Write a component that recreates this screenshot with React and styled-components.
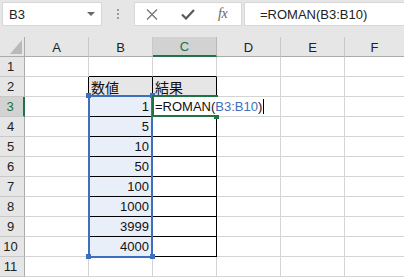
import React from 'react';
import styled, { createGlobalStyle } from 'styled-components';

const GlobalStyle = createGlobalStyle`
  html, body {
    margin: 0;
    padding: 0;
    background: #ffffff;
  }
  body {
    width: 404px;
    height: 277px;
    overflow: hidden;
    font-family: "Liberation Sans", "Noto Sans CJK JP", sans-serif;
  }
`

const BLUE = '#3d6fbd';
const GREEN = '#217346';
const GRID = '#d4d4d4';

const Page = styled.div`
  width: 404px;
  height: 277px;
  overflow: hidden;
  background: #e6e6e6;
`

const Toolbar = styled.div`
  height: 37px;
  box-sizing: border-box;
  padding: 2px 0 0 2px;
  display: flex;
  align-items: flex-start;
`

const NameBox = styled.div`
  width: 100px;
  height: 24px;
  box-sizing: border-box;
  background: #fff;
  border: 1px solid #d8d8d8;
  display: flex;
  align-items: center;
  justify-content: space-between;
  padding: 0 6px 0 6px;
  font-size: 13px;
  color: #222;
`

const Arrow = styled.span`
  width: 0;
  height: 0;
  border-left: 4px solid transparent;
  border-right: 4px solid transparent;
  border-top: 4px solid #666;
`

const Grip = styled.div`
  width: 32px;
  height: 24px;
  display: flex;
  flex-direction: column;
  align-items: center;
  justify-content: center;
  gap: 2px;
  span {
    width: 2px;
    height: 2px;
    background: #9a9a9a;
  }
`

const ButtonBox = styled.div`
  width: 108px;
  height: 24px;
  box-sizing: border-box;
  background: #fff;
  border: 1px solid #d8d8d8;
  display: flex;
  align-items: center;
  padding-left: 11px;
`

const IconSlot = styled.div`
  width: ${p => p.$w}px;
  display: flex;
  align-items: center;
  justify-content: flex-start;
`

const Fx = styled.span`
  font-family: "Liberation Serif", "DejaVu Serif", serif;
  font-style: italic;
  font-size: 14px;
  color: #666;
  letter-spacing: -0.5px;
`

const FormulaInput = styled.div`
  flex: 1;
  margin-left: 2px;
  height: 24px;
  box-sizing: border-box;
  background: #fff;
  border: 1px solid #d8d8d8;
  border-right: none;
  display: flex;
  align-items: center;
  padding-left: 15px;
  font-size: 13px;
  color: #222;
`

const Sheet = styled.div`
  position: relative;
  display: grid;
  grid-template-columns: 25px 64px 64px 64px 64px 64px 60px;
  grid-auto-rows: 20px;
  background: #fff;
`

const ColHead = styled.div`
  box-sizing: border-box;
  background: ${p => (p.$active ? '#d2d2d2' : '#e6e6e6')};
  color: ${p => (p.$active ? GREEN : '#222')};
  border-right: 1px solid ${p => (p.$active ? '#b8b8b8' : '#c8c8c8')};
  border-bottom: ${p => (p.$active ? `2px solid ${GREEN}` : '1px solid #ababab')};
  display: flex;
  align-items: center;
  justify-content: center;
  font-size: 13px;
  padding-top: 1px;
`

const Corner = styled.div`
  box-sizing: border-box;
  background: #e6e6e6;
  border-right: 1px solid #ababab;
  border-bottom: 1px solid #ababab;
  display: flex;
  align-items: flex-end;
  justify-content: flex-end;
  padding: 0 2px 2px 0;
`

const RowHead = styled.div`
  box-sizing: border-box;
  background: ${p => (p.$active ? '#d2d2d2' : '#e6e6e6')};
  color: ${p => (p.$active ? GREEN : '#222')};
  border-right: ${p => (p.$active ? `2px solid ${GREEN}` : '1px solid #ababab')};
  border-bottom: 1px solid #c8c8c8;
  display: flex;
  align-items: center;
  justify-content: center;
  padding-right: 3px;
  font-size: 13px;
`

const Cell = styled.div`
  box-sizing: border-box;
  border-right: 1px solid ${p => (p.$right ? '#000' : GRID)};
  border-bottom: 1px solid ${p => (p.$bottom ? '#000' : GRID)};
  background: ${p => p.$fill || 'transparent'};
  display: flex;
  align-items: center;
  justify-content: ${p => (p.$num ? 'flex-end' : 'flex-start')};
  padding: 0 3px 0 2px;
  font-size: ${p => (p.$jp ? '14px' : '13px')};
  font-family: ${p => (p.$jp ? '"Noto Sans CJK JP", sans-serif' : '"Liberation Sans", sans-serif')};
  color: #111;
  white-space: nowrap;
`

const Selection = styled.div`
  position: absolute;
  left: 88px;
  top: 58px;
  width: 65px;
  height: 163px;
  box-sizing: border-box;
  border: 2px solid ${BLUE};
  pointer-events: none;
`

const Handle = styled.div`
  position: absolute;
  width: 5px;
  height: 5px;
  background: ${p => p.$color};
  left: ${p => p.$x}px;
  top: ${p => p.$y}px;
`

const ActiveCell = styled.div`
  position: absolute;
  left: 152px;
  top: 58px;
  width: 66px;
  height: 22px;
  box-sizing: border-box;
  border: 2px solid ${GREEN};
`

const Editor = styled.div`
  position: absolute;
  left: 154px;
  top: 60px;
  height: 18px;
  display: flex;
  align-items: center;
  background: #fff;
  padding: 0 2px 0 1px;
  font-size: 13px;
  color: #111;
  white-space: nowrap;
`

const Ref = styled.span`
  color: ${BLUE};
`

const Caret = styled.span`
  display: inline-block;
  width: 1px;
  height: 15px;
  background: #000;
  margin-left: 1px;
`

const cols = ['A', 'B', 'C', 'D', 'E', 'F'];
const values = [1, 5, 10, 50, 100, 1000, 3999, 4000];

const XIcon = () => (
  <svg width="12" height="11" viewBox="0 0 12 11">
    <path d="M1 0.5 L11 10.5 M11 0.5 L1 10.5" stroke="#7a7a7a" strokeWidth="1.4" fill="none" />
  </svg>
);

const CheckIcon = () => (
  <svg width="14" height="11" viewBox="0 0 14 11">
    <path d="M1 5.5 L5 9.5 L13 1" stroke="#5a5a5a" strokeWidth="2.2" fill="none" />
  </svg>
);

const CornerMark = () => (
  <svg width="12" height="14" viewBox="0 0 12 14">
    <polygon points="12,0 12,14 0,14" fill="#b9b9b9" />
  </svg>
);

function rowCells(r) {
  return cols.map(col => {
    const inTable = (col === 'B' || col === 'C') && r >= 2 && r <= 10;
    const props = {};
    if (col === 'A' && r >= 2 && r <= 10) props.$right = true;
    if ((col === 'B' || col === 'C') && r === 1) props.$bottom = true;
    if (inTable) {
      props.$right = true;
      props.$bottom = true;
    }
    let content = null;
    if (r === 2 && (col === 'B' || col === 'C')) {
      content = col === 'B' ? '数値' : '結果';
      props.$fill = '#e7e6e6';
      props.$jp = true;
    }
    if (col === 'B' && r >= 3 && r <= 10) {
      content = values[r - 3];
      props.$num = true;
      props.$fill = '#e9eff9';
    }
    return <Cell key={`${col}${r}`} {...props}>{content}</Cell>;
  });
}

export default function App() {
  const rows = [];
  for (let r = 1; r <= 11; r++) {
    rows.push(<RowHead key={`h${r}`} $active={r === 3}>{r}</RowHead>);
    rows.push(...rowCells(r));
  }

  return (
    <Page>
      <GlobalStyle />
      <Toolbar>
        <NameBox>
          B3
          <Arrow />
        </NameBox>
        <Grip>
          <span />
          <span />
          <span />
        </Grip>
        <ButtonBox>
          <IconSlot $w={35}><XIcon /></IconSlot>
          <IconSlot $w={37}><CheckIcon /></IconSlot>
          <IconSlot $w={20}><Fx>fx</Fx></IconSlot>
        </ButtonBox>
        <FormulaInput>=ROMAN(B3:B10)</FormulaInput>
      </Toolbar>
      <Sheet>
        <Corner><CornerMark /></Corner>
        {cols.map(c => (
          <ColHead key={`c${c}`} $active={c === 'C'}>{c}</ColHead>
        ))}
        {rows}
        <Selection />
        <Handle $color={BLUE} $x={86} $y={56} />
        <Handle $color={BLUE} $x={150} $y={56} />
        <Handle $color={BLUE} $x={86} $y={217} />
        <Handle $color={BLUE} $x={150} $y={217} />
        <ActiveCell />
        <Handle $color={GREEN} $x={214} $y={77} />
        <Editor>
          =ROMAN(<Ref>B3:B10</Ref>)<Caret />
        </Editor>
      </Sheet>
    </Page>
  );
}
